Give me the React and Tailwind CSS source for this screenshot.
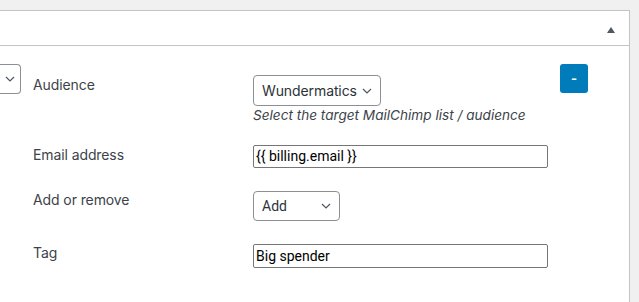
import React from "react";

const Chevron = ({ className = "" }) => (
  <svg viewBox="0 0 10 6" className={className} fill="none">
    <path d="M1 1l4 4 4-4" stroke="#50575e" strokeWidth="1.2" />
  </svg>
);

const Field = ({ label, children }) => (
  <div className="flex items-start pl-[33px]">
    <div className="w-[220px] shrink-0 text-[14px] leading-5 tracking-[-0.1px] text-[#3c434a]">{label}</div>
    <div>{children}</div>
  </div>
);

export default function App() {
  return (
    <div className="w-[639px] h-[302px] overflow-hidden bg-[#f0f0f1] pt-[10px] font-['Inter',sans-serif]">
      <div className="w-[630px] h-[300px] bg-white border-t border-r border-[#c3c4c7]">
        <div className="h-[35px] border-b border-[#c3c4c7] flex items-center justify-end pr-[14px]">
          <svg viewBox="0 0 8 6" className="w-[8px] h-[6px] mt-[3px]">
            <path d="M4 0L8 6H0z" fill="#50575e" />
          </svg>
        </div>

        <div className="flex items-start h-[89px]">
          <div className="mt-[18px] w-[21px] shrink-0 h-[30px] border border-l-0 border-[#8c8f94] rounded-r-[4px] flex items-center justify-end pr-[5px]">
            <Chevron className="w-[10px] h-[6px]" />
          </div>
          <div className="w-[220px] shrink-0 ml-[12px] mt-[29px] text-[14px] leading-5 tracking-[-0.1px] text-[#3c434a]">Audience</div>
          <div className="mt-[29px] w-[307px] shrink-0">
            <div className="w-[128px] h-[31px] border border-[#8c8f94] rounded-[4px] flex items-center justify-between pl-[8px] pr-[8px] text-[14px] tracking-[-0.1px] text-[#2c3338]">
              <span>Wundermatics</span>
              <Chevron className="w-[10px] h-[6px]" />
            </div>
            <div className="text-[13.6px] italic text-[#3c434a] leading-[20px] mt-[-1px]">Select the target MailChimp list / audience</div>
          </div>
          <button className="mt-[18px] w-[28px] h-[29px] rounded-[3px] bg-[#007cba] text-white text-[13px] leading-none flex items-center justify-center font-bold">
            -
          </button>
        </div>

        <div className="pt-[10px]">
          <Field label="Email address">
            <div className="w-[295px] h-[23px] border border-[#767676] rounded-[2px] pl-[2px] flex items-center text-[14px] text-black font-['Roboto',sans-serif]">
              {"{{ billing.email }}"}
            </div>
          </Field>
        </div>

        <div className="pt-[22px]">
          <Field label="Add or remove">
            <div className="mt-[1px] w-[87px] h-[30px] border border-[#8c8f94] rounded-[4px] flex items-center justify-between pl-[8px] pr-[8px] text-[14px] text-[#2c3338] font-['Roboto',sans-serif]">
              <span>Add</span>
              <Chevron className="w-[10px] h-[6px]" />
            </div>
          </Field>
        </div>

        <div className="pt-[22px]">
          <Field label="Tag">
            <div className="mt-[1px] w-[295px] h-[24px] border border-[#767676] rounded-[2px] pl-[2px] flex items-center text-[14px] text-black font-['Roboto',sans-serif]">
              Big spender
            </div>
          </Field>
        </div>
      </div>
    </div>
  );
}
